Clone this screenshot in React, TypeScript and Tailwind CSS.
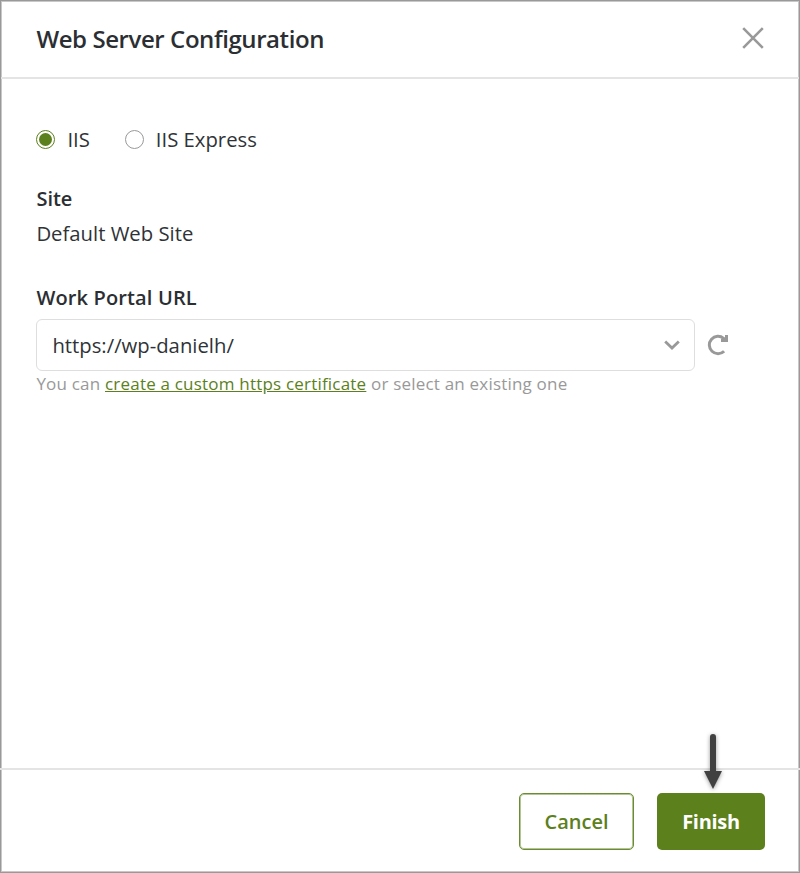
import React, { useState } from 'react';

const servers = [
    { id: 'iis', label: 'IIS' },
    { id: 'iis-express', label: 'IIS Express' },
];

const CloseIcon: React.FC = () => (
    <svg className="w-[22px] h-[22px]" viewBox="0 0 22 22" fill="none" stroke="#999999" strokeWidth="2.6">
        <path d="M1.2 1.2L20.8 20.8M20.8 1.2L1.2 20.8" />
    </svg>
);

const ChevronIcon: React.FC = () => (
    <svg className="w-4 h-[10px]" viewBox="0 0 16 10" fill="none" stroke="#999999" strokeWidth="2.8">
        <path d="M1.2 1.5L8 8L14.8 1.5" />
    </svg>
);

const RefreshIcon: React.FC = () => (
    <svg className="w-[22px] h-[22px]" viewBox="0 0 22 22" fill="none" stroke="#999999" strokeWidth="3">
        <path d="M17.1 17.2A8.7 8.7 0 1 1 16.6 4.3L18.6 6.2" />
        <path d="M14 6.6H19.5V1" />
    </svg>
);

const PointerArrow: React.FC = () => (
    <svg className="absolute left-1/2 -translate-x-1/2 top-[-63px] ml-[2px] w-[30px] h-[64px]" viewBox="0 0 30 64">
        <g className="drop-shadow-[0_1px_2px_rgba(0,0,0,0.4)]" fill="#414141">
            <path d="M12 7a3 3 0 0 1 6 0V41H24L15 59L6 41H12Z" />
        </g>
    </svg>
);

const App: React.FC = () => {
    const [server, setServer] = useState('iis');

    return (
        <div className="w-[800px] h-[873px] flex flex-col bg-white border border-[#999999] shadow-[inset_0_0_0_1px_#c8c8c8] font-['Open_Sans',sans-serif] text-[#2f3337]">
            <header className="h-[78px] shrink-0 flex items-center justify-between pl-[35.4px] pr-[35px] border-b-2 border-[#e4e4e4]">
                <h1 className="text-[24px] leading-8 font-semibold tracking-[-0.42px] text-[#2b2f33]">Web Server Configuration</h1>
                <button aria-label="Close" className="mb-[2px]"><CloseIcon /></button>
            </header>

            <main className="flex-1 pl-[35.4px] pt-[44px]">
                <div className="flex gap-[35px] h-8">
                    {servers.map(item => (
                        <label key={item.id} className="flex items-center gap-3 text-[20.3px] leading-7">
                            <input
                                type="radio"
                                name="server"
                                className="peer sr-only"
                                checked={server === item.id}
                                onChange={() => setServer(item.id)}
                            />
                            <span className="w-[19px] h-[19px] rounded-full border border-[#999999] flex items-center justify-center peer-checked:border-[#5c801c] peer-checked:[&>i]:bg-[#5c801c]">
                                <i className="w-[13px] h-[13px] rounded-full" />
                            </span>
                            <span>{item.label}</span>
                        </label>
                    ))}
                </div>

                <section className="mt-[28px]">
                    <h2 className="text-[20px] leading-8 font-semibold text-[#2b2f33]">Site</h2>
                    <p className="text-[20.3px] leading-8 mt-[2px]">Default Web Site</p>
                </section>

                <section className="mt-[33px]">
                    <h2 className="text-[20px] leading-8 font-semibold tracking-[0.14px] text-[#2b2f33]">Work Portal URL</h2>
                    <div className="flex items-center gap-[12px] mt-[5px]">
                        <button className="w-[659px] h-[52px] flex items-center justify-between rounded-[6px] border border-[#dedede] pl-[15px] pr-[14px] text-[20.3px]">
                            <span>https://wp-danielh/</span>
                            <ChevronIcon />
                        </button>
                        <button aria-label="Refresh"><RefreshIcon /></button>
                    </div>
                    <p className="mt-px text-[17px] leading-6 tracking-[0.2px] text-[#999999]">
                        You can <a href="#" className="text-[#5c801c] underline">create a custom https certificate</a> or select an existing one
                    </p>
                </section>
            </main>

            <footer className="h-[104px] shrink-0 -mx-px flex justify-end gap-[23px] pt-[23px] pr-[35px] border-t-2 border-[#e4e4e4]">
                <button className="w-[115px] h-[57px] rounded-[5px] border border-[#6c8c33] shadow-[inset_0_0_0_1px_#b4c595] text-[20px] font-semibold text-[#5c801c]">Cancel</button>
                <div className="relative">
                    <button className="w-[108px] h-[57px] rounded-[5px] bg-[#5c801c] text-[20px] font-bold tracking-[-0.3px] text-white">Finish</button>
                    <PointerArrow />
                </div>
            </footer>
        </div>
    );
};

export default App;
